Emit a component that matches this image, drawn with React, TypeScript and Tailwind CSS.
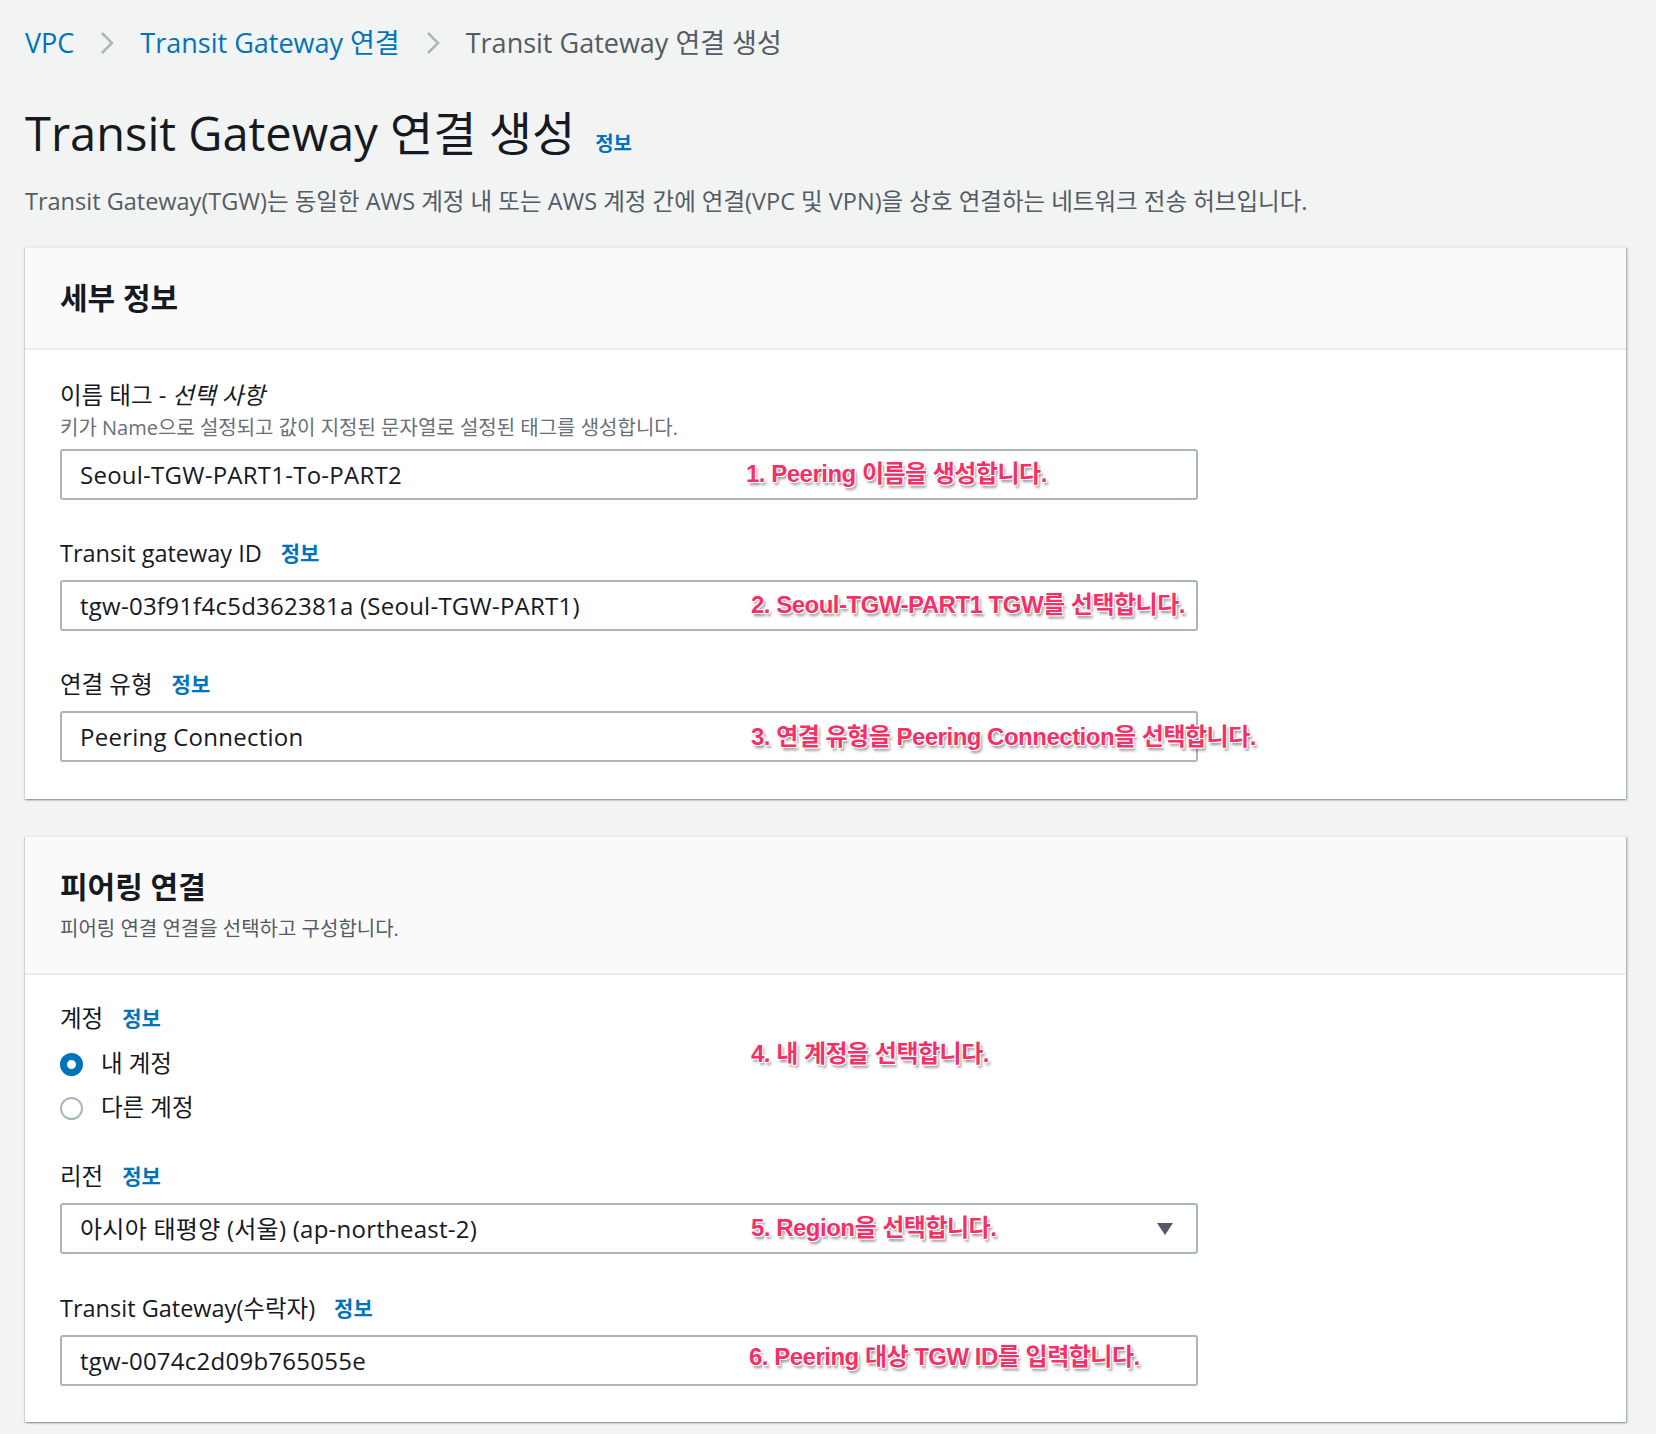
import React from "react";

function Info() {
  return <span className="ml-[19px] text-[21px] font-bold text-[#0073bb]">정보</span>;
}

function Chevron() {
  return (
    <svg width="16" height="26" viewBox="0 0 16 26" className="shrink-0">
      <polyline points="3,3 13,13 3,23" fill="none" stroke="#aab7b8" strokeWidth="2.5" />
    </svg>
  );
}

function Note({ children, className }: { children: React.ReactNode; className: string }) {
  return (
    <span
      className={`pointer-events-none absolute whitespace-nowrap font-['Liberation_Sans','Noto_Sans_CJK_KR',sans-serif] text-[24px] leading-[30px] font-bold tracking-[-0.5px] text-[#f33068] [text-shadow:-1px_-1px_0_#fff,1px_-1px_0_#fff,-1px_1px_0_#fff,1px_1px_0_#fff,2px_3px_3px_rgba(0,0,0,0.45)] ${className}`}
    >
      {children}
    </span>
  );
}

function Input({ value, note, select }: { value: string; note?: React.ReactNode; select?: boolean }) {
  return (
    <div className="relative flex h-[51px] w-[1138px] items-center rounded-[3px] border-2 border-[#aab7b8] bg-white pl-[18px] pr-[22px]">
      <span className="flex-1 text-[24px] tracking-[0.25px] text-[#16191f]">{value}</span>
      {select && (
        <svg width="18" height="14" viewBox="0 0 18 14">
          <polygon points="1,1 17,1 9,13" fill="#545b64" />
        </svg>
      )}
      {note}
    </div>
  );
}

function Label({ children, info = true }: { children: React.ReactNode; info?: boolean }) {
  return (
    <div className="flex h-[30px] items-center text-[23.5px] text-[#16191f]">
      <span>{children}</span>
      {info && <Info />}
    </div>
  );
}

function Radio({ checked, label }: { checked?: boolean; label: string }) {
  return (
    <div className="flex h-[30px] items-center gap-[18px] text-[23.5px] text-[#16191f]">
      {checked ? (
        <span className="h-[23px] w-[23px] rounded-full border-[7px] border-[#0073bb] bg-white" />
      ) : (
        <span className="h-[23px] w-[23px] rounded-full border-2 border-[#aab7b8] bg-white" />
      )}
      <span>{label}</span>
    </div>
  );
}

function Card({ title, desc, children }: { title: string; desc?: string; children: React.ReactNode }) {
  return (
    <section className="border-t border-[#eaeded] bg-white shadow-[1px_1px_2px_0_rgba(0,28,36,0.4),-1px_1px_1px_0_rgba(0,28,36,0.12)]">
      <header className={`border-b-2 border-[#eaeded] bg-[#fafafa] px-[35px] ${desc ? "pt-[32px] pb-[32px]" : "py-[32px]"}`}>
        <h2 className="h-[36px] text-[30px] leading-[36px] font-bold text-[#16191f]">{title}</h2>
        {desc && <p className="mt-[12px] text-[20px] leading-[24px] text-[#545b64]">{desc}</p>}
      </header>
      <div className="px-[35px]">{children}</div>
    </section>
  );
}

export default function App() {
  return (
    <div className="min-h-screen bg-[#f2f3f3] pt-[28px] pr-[30px] pb-[13px] pl-[25px] font-['Open_Sans','Noto_Sans_CJK_KR',sans-serif]">
      <nav className="flex h-[30px] items-center gap-[25px] text-[27px]">
        <span className="text-[#0073bb]">VPC</span>
        <Chevron />
        <span className="text-[#0073bb]">Transit Gateway 연결</span>
        <Chevron />
        <span className="text-[#545b64]">Transit Gateway 연결 생성</span>
      </nav>

      <div className="mt-[47px] flex h-[56px] items-baseline">
        <h1 className="text-[47px] leading-[56px] text-[#16191f]">Transit Gateway 연결 생성</h1>
        <span className="ml-[20px] text-[20px] font-bold text-[#0073bb]">정보</span>
      </div>

      <p className="mt-[25px] h-[30px] text-[23.5px] leading-[30px] text-[#545b64]">
        Transit Gateway(TGW)는 동일한 AWS 계정 내 또는 AWS 계정 간에 연결(VPC 및 VPN)을 상호 연결하는 네트워크 전송 허브입니다.
      </p>

      <div className="mt-[31px]">
        <Card title="세부 정보">
          <div className="pt-[31px] pb-[37px]">
            <div className="flex h-[30px] items-center text-[23.5px] text-[#16191f]">
              이름 태그 -&nbsp;<i>선택 사항</i>
            </div>
            <p className="mt-[5px] h-[24px] text-[20px] leading-[24px] text-[#687078]">
              키가 Name으로 설정되고 값이 지정된 문자열로 설정된 태그를 생성합니다.
            </p>
            <div className="mt-[9px]">
              <Input value="Seoul-TGW-PART1-To-PART2" note={<Note className="left-[684px] top-[8px]">1. Peering 이름을 생성합니다.</Note>} />
            </div>

            <div className="mt-[39px]">
              <Label>Transit gateway ID</Label>
            </div>
            <div className="mt-[11px]">
              <Input
                value="tgw-03f91f4c5d362381a (Seoul-TGW-PART1)"
                note={<Note className="left-[689px] top-[8px]">2. Seoul-TGW-PART1 TGW를 선택합니다.</Note>}
              />
            </div>

            <div className="mt-[39px]">
              <Label>연결 유형</Label>
            </div>
            <div className="mt-[11px]">
              <Input
                value="Peering Connection"
                note={<Note className="left-[689px] top-[9px]">3. 연결 유형을 Peering Connection을 선택합니다.</Note>}
              />
            </div>
          </div>
        </Card>
      </div>

      <div className="mt-[37px]">
        <Card title="피어링 연결" desc="피어링 연결 연결을 선택하고 구성합니다.">
          <div className="pt-[29px] pb-[36px]">
            <div className="relative">
              <Label>계정</Label>
              <div className="mt-[15px]">
                <Radio checked label="내 계정" />
              </div>
              <div className="mt-[14px]">
                <Radio label="다른 계정" />
              </div>
              <Note className="left-[691px] top-[35px]">4. 내 계정을 선택합니다.</Note>
            </div>

            <div className="mt-[39px]">
              <Label>리전</Label>
            </div>
            <div className="mt-[11px]">
              <Input
                select
                value="아시아 태평양 (서울) (ap-northeast-2)"
                note={<Note className="left-[689px] top-[8px]">5. Region을 선택합니다.</Note>}
              />
            </div>

            <div className="mt-[40px]">
              <Label>Transit Gateway(수락자)</Label>
            </div>
            <div className="mt-[11px]">
              <Input value="tgw-0074c2d09b765055e" note={<Note className="left-[687px] top-[5px]">6. Peering 대상 TGW ID를 입력합니다.</Note>} />
            </div>
          </div>
        </Card>
      </div>
    </div>
  );
}
